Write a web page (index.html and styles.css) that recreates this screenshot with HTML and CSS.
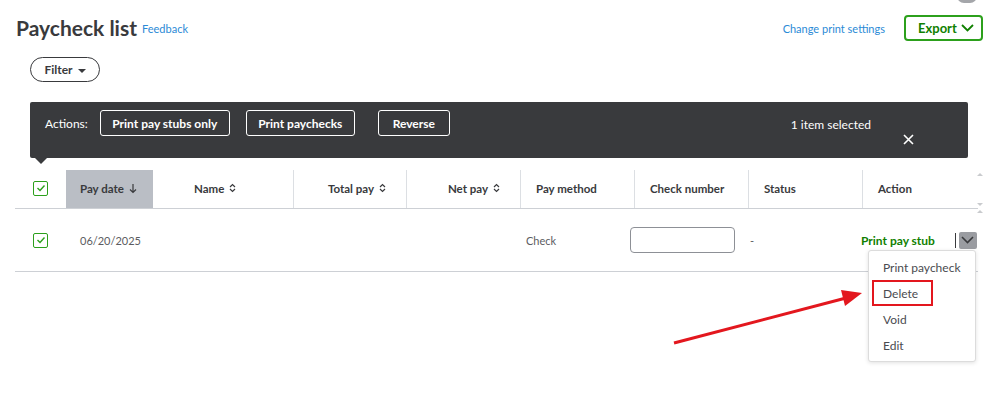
FILE: index.html
```html
<!DOCTYPE html>
<html lang="en">

<head>
    <meta charset="UTF-8">
    <meta name="viewport" content="width=device-width, initial-scale=1.0">
    <title>Paycheck list</title>
    <link rel="stylesheet" href="styles.css">
</head>

<body>
    <div class="page">
        <div class="toggle"></div>

        <header class="top">
            <div class="title-group">
                <h1>Paycheck list</h1>
                <a class="link" href="#">Feedback</a>
            </div>
            <div class="top-right">
                <a class="link" href="#">Change print settings</a>
                <button class="export">Export
                    <svg width="13" height="8" viewBox="0 0 13 8"><path d="M1 1 L6.5 6.5 L12 1" fill="none" stroke="#108000" stroke-width="1.8"/></svg>
                </button>
            </div>
        </header>

        <div class="filter-row">
            <button class="filter">Filter <span class="caret"></span></button>
        </div>

        <div class="action-bar">
            <div class="actions">
                <span class="actions-label">Actions:</span>
                <button class="act-btn btn-stubs">Print pay stubs only</button>
                <button class="act-btn btn-checks">Print paychecks</button>
                <button class="act-btn btn-reverse">Reverse</button>
            </div>
            <div class="selected">
                <span class="selected-text">1 item selected</span>
                <svg class="close" width="11" height="11" viewBox="0 0 11 11"><path d="M1 1 L10 10 M10 1 L1 10" stroke="#fff" stroke-width="1.6"/></svg>
            </div>
        </div>

        <div class="table">
            <div class="row thead">
                <div class="th cell-check">
                    <span class="cb"><svg width="12" height="12" viewBox="0 0 12 12"><path d="M2.5 6 L5 8.5 L9.5 3.5" fill="none" stroke="#2ca01c" stroke-width="1.4"/></svg></span>
                </div>
                <div class="th th-date">Pay date
                    <svg class="sort" width="8" height="11" viewBox="0 0 8 11"><path d="M4 1 V9.5 M1 6.5 L4 9.5 L7 6.5" fill="none" stroke="#393a3d" stroke-width="1.2"/></svg>
                </div>
                <div class="th th-name">Name
                    <svg class="sort" width="7" height="10" viewBox="0 0 7 10"><path d="M1 4 L3.5 1.5 L6 4 M1 6 L3.5 8.5 L6 6" fill="none" stroke="#393a3d" stroke-width="1.2"/></svg>
                </div>
                <div class="th divided right">Total pay
                    <svg class="sort" width="7" height="10" viewBox="0 0 7 10"><path d="M1 4 L3.5 1.5 L6 4 M1 6 L3.5 8.5 L6 6" fill="none" stroke="#393a3d" stroke-width="1.2"/></svg>
                </div>
                <div class="th divided right">Net pay
                    <svg class="sort" width="7" height="10" viewBox="0 0 7 10"><path d="M1 4 L3.5 1.5 L6 4 M1 6 L3.5 8.5 L6 6" fill="none" stroke="#393a3d" stroke-width="1.2"/></svg>
                </div>
                <div class="th divided">Pay method</div>
                <div class="th divided">Check number</div>
                <div class="th divided">Status</div>
                <div class="th divided">Action</div>
            </div>

            <div class="row tbody">
                <div class="td cell-check">
                    <span class="cb"><svg width="12" height="12" viewBox="0 0 12 12"><path d="M2.5 6 L5 8.5 L9.5 3.5" fill="none" stroke="#2ca01c" stroke-width="1.4"/></svg></span>
                </div>
                <div class="td td-date">06/20/2025</div>
                <div class="td"></div>
                <div class="td"></div>
                <div class="td"></div>
                <div class="td td-method">Check</div>
                <div class="td td-number"><input class="check-input" type="text"></div>
                <div class="td td-status">-</div>
                <div class="td td-action">
                    <a class="stub-link" href="#">Print pay stub</a>
                    <span class="sep"></span>
                    <span class="more-btn"><svg width="13" height="8" viewBox="0 0 13 8"><path d="M1 1 L6.5 6.5 L12 1" fill="none" stroke="#393a3d" stroke-width="1.6"/></svg></span>
                </div>
            </div>
        </div>

        <span class="scroll-arrow up a1"></span>
        <span class="scroll-arrow down a2"></span>
        <span class="scroll-arrow up a3"></span>

        <ul class="menu">
            <li>Print paycheck</li>
            <li>Delete</li>
            <li>Void</li>
            <li>Edit</li>
        </ul>
        <div class="mark"></div>

        <svg class="arrow" width="999" height="396" viewBox="0 0 999 396">
            <line x1="674" y1="343" x2="846" y2="298" stroke="#e3171e" stroke-width="3"/>
            <polygon points="862,293 845,306 841,290" fill="#e3171e"/>
        </svg>
    </div>
</body>

</html>
```

FILE: styles.css
```css
html,
body {
    padding: 0;
    margin: 0;
}

body {
    font-family: Lato, "Liberation Sans", sans-serif;
    color: #393a3d;
    background: #fff;
}

.page {
    position: relative;
    width: 999px;
    height: 396px;
    overflow: hidden;
}

.toggle {
    position: absolute;
    left: 957px;
    top: -11px;
    width: 20px;
    height: 14px;
    border-radius: 7px;
    background: #a4a6aa;
}

/* header */
.top {
    display: flex;
    justify-content: space-between;
    align-items: center;
    height: 26px;
    padding: 15px 16px 0 16px;
}

.title-group {
    display: flex;
    align-items: center;
    gap: 5px;
}

h1 {
    margin: 0;
    font-size: 21px;
    font-weight: 700;
    line-height: 26px;
}

.link {
    color: #2b8ad6;
    font-size: 11px;
    text-decoration: none;
}

.top-right {
    display: flex;
    align-items: center;
    gap: 19px;
}

.export {
    display: flex;
    align-items: center;
    justify-content: space-between;
    box-sizing: border-box;
    width: 79px;
    height: 26px;
    padding: 0 7px 0 12px;
    border: 2px solid #2ca01c;
    border-radius: 4px;
    background: #fff;
    color: #108000;
    font-family: Lato, "Liberation Sans", sans-serif;
    font-size: 13px;
    font-weight: 700;
}

.filter-row {
    padding: 16px 0 0 30px;
}

.filter {
    display: flex;
    align-items: center;
    justify-content: center;
    gap: 5px;
    box-sizing: border-box;
    width: 70px;
    height: 25px;
    border: 1.5px solid #393a3d;
    border-radius: 13px;
    background: #fff;
    color: #393a3d;
    font-family: Lato, "Liberation Sans", sans-serif;
    font-size: 12px;
    font-weight: 700;
}

.caret {
    width: 0;
    height: 0;
    border-left: 4px solid transparent;
    border-right: 4px solid transparent;
    border-top: 4px solid #393a3d;
    margin-top: 2px;
}

/* action bar */
.action-bar {
    position: relative;
    display: flex;
    justify-content: space-between;
    box-sizing: border-box;
    height: 56px;
    margin: 20px 31px 0 30px;
    padding: 8px 54px 0 15px;
    background: #393a3d;
    border-radius: 2px;
    color: #fff;
}

.action-bar::after {
    content: "";
    position: absolute;
    left: 5px;
    bottom: -6px;
    border-left: 6px solid transparent;
    border-right: 6px solid transparent;
    border-top: 6px solid #393a3d;
}

.actions {
    display: flex;
    align-items: center;
    height: 26px;
}

.actions-label {
    font-size: 12px;
    margin-right: 12px;
}

.act-btn {
    box-sizing: border-box;
    height: 26px;
    border: 1.5px solid #fff;
    border-radius: 3px;
    background: transparent;
    color: #fff;
    font-family: Lato, "Liberation Sans", sans-serif;
    font-size: 12px;
    font-weight: 700;
    padding: 0;
}

.btn-stubs {
    width: 130px;
}

.btn-checks {
    width: 109px;
    margin-left: 16px;
}

.btn-reverse {
    width: 72px;
    margin-left: 23px;
}

.selected {
    display: flex;
    align-items: flex-start;
    gap: 32px;
}

.selected-text {
    font-size: 12px;
    line-height: 30px;
}

.close {
    margin-top: 24px;
}

/* table */
.table {
    margin: 12px 21px 0 15px;
}

.row {
    display: grid;
    grid-template-columns: 51px 87px 140px 113px 114px 114px 114px 114px 116px;
}

.thead {
    height: 38px;
    border-bottom: 1px solid #cdd0d5;
}

.th {
    display: flex;
    align-items: center;
    gap: 5px;
    padding-bottom: 2px;
    font-size: 11.5px;
    font-weight: 700;
    padding-left: 15px;
}

.th.divided {
    border-left: 1px solid #dcdfe3;
}

.th.right {
    justify-content: flex-end;
    padding-left: 0;
    padding-right: 20px;
}

.th-date {
    background: #babec5;
    padding-left: 14px;
}

.th-name {
    padding-left: 41px;
}

.cell-check {
    display: flex;
    align-items: center;
    padding-left: 18px;
}

.cb {
    display: flex;
    align-items: center;
    justify-content: center;
    box-sizing: border-box;
    width: 15px;
    height: 15px;
    border: 1px solid #2ca01c;
    border-radius: 2px;
}

.tbody {
    height: 62px;
    border-bottom: 1px solid #cdd0d5;
}

.td {
    display: flex;
    align-items: center;
    font-size: 11px;
    color: #5b5c61;
}

.td-date {
    padding-left: 14px;
}

.td-method {
    padding-left: 6px;
}

.td-number {
    margin-left: -4px;
}

.check-input {
    box-sizing: border-box;
    width: 105px;
    height: 26px;
    border: 1px solid #8d9096;
    border-radius: 4px;
}

.td-status {
    padding-left: 2px;
}

.td-action {
    margin-left: -1px;
}

.stub-link {
    color: #108000;
    font-size: 12px;
    font-weight: 700;
    text-decoration: none;
}

.sep {
    width: 1px;
    height: 15px;
    margin-left: 20px;
    background: #393a3d;
}

.more-btn {
    display: flex;
    align-items: center;
    justify-content: center;
    width: 18px;
    height: 17px;
    margin-left: 3px;
    border-radius: 2px;
    background: #9a9ca1;
}

.scroll-arrow {
    position: absolute;
    left: 977px;
    width: 0;
    height: 0;
    border-left: 3px solid transparent;
    border-right: 3px solid transparent;
}

.scroll-arrow.up {
    border-bottom: 3px solid #c9cbce;
}

.scroll-arrow.down {
    border-top: 3px solid #c9cbce;
}

.a1 {
    top: 173px;
}

.a2 {
    top: 203px;
}

.a3 {
    top: 210px;
}

/* dropdown menu */
.menu {
    position: absolute;
    left: 868px;
    top: 250px;
    box-sizing: border-box;
    width: 108px;
    height: 112px;
    margin: 0;
    padding: 4px 0 0 0;
    list-style: none;
    background: #fff;
    border: 1px solid #dcdcdc;
    border-radius: 3px;
    box-shadow: 0 1px 4px rgba(0, 0, 0, 0.12);
}

.menu li {
    padding-left: 14px;
    font-size: 12px;
    line-height: 26px;
    color: #4a4b50;
}

.mark {
    position: absolute;
    left: 872px;
    top: 280px;
    box-sizing: border-box;
    width: 61px;
    height: 26px;
    border: 2.5px solid #e3171e;
}

.arrow {
    position: absolute;
    left: 0;
    top: 0;
    pointer-events: none;
}
```
